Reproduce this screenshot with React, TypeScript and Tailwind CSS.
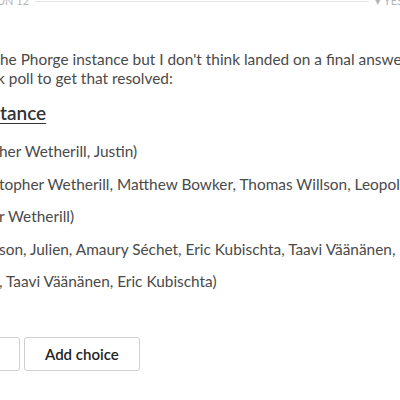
export default function App() {
  const options = [
    "her Wetherill, Justin)",
    "topher Wetherill, Matthew Bowker, Thomas Willson, Leopold",
    "r Wetherill)",
    "son, Julien, Amaury Séchet, Eric Kubischta, Taavi Väänänen,",
    ", Taavi Väänänen, Eric Kubischta)",
  ];

  return (
    <div
      className="h-[400px] w-[400px] overflow-hidden bg-white text-[#4a4a4a]"
      style={{ fontFamily: "Lato, 'Noto Sans', sans-serif" }}
    >
      {/* timeline divider */}
      <div className="-mt-[8px] flex items-center gap-[6px] whitespace-nowrap text-[11px] leading-[18px] text-[#b5b5b5]">
        <span className="-ml-[3px] uppercase">un 12</span>
        <div className="h-px flex-1 bg-[#e5e5e5]" />
        <span className="-mr-[3px]">▾ YES</span>
      </div>

      <div className="mt-[40px] whitespace-nowrap text-[15.4px] leading-[19px]">
        <div>he Phorge instance but I don't think landed on a final answer.</div>
        <div className="-ml-[3px]">k poll to get that resolved:</div>
      </div>

      <h2 className="mt-[12px] whitespace-nowrap text-[19px] font-semibold leading-[26px] text-[#333] underline underline-offset-[3px]">
        tance
      </h2>

      <div className="mt-[15px] flex flex-col gap-[11.5px] whitespace-nowrap text-[15.4px] leading-[21px]">
        {options.map((o) => (
          <div key={o} className="-ml-[1px]">
            {o}
          </div>
        ))}
      </div>

      <div className="mt-[45px] flex gap-[4px]">
        <button className="-ml-[40px] h-[34px] w-[60px] rounded-[3px] border border-[#d0d0d0] bg-white" />
        <button className="h-[34px] rounded-[3px] border border-[#d0d0d0] bg-white px-[20px] text-[15px] font-semibold text-[#222]">
          Add choice
        </button>
      </div>
    </div>
  );
}
